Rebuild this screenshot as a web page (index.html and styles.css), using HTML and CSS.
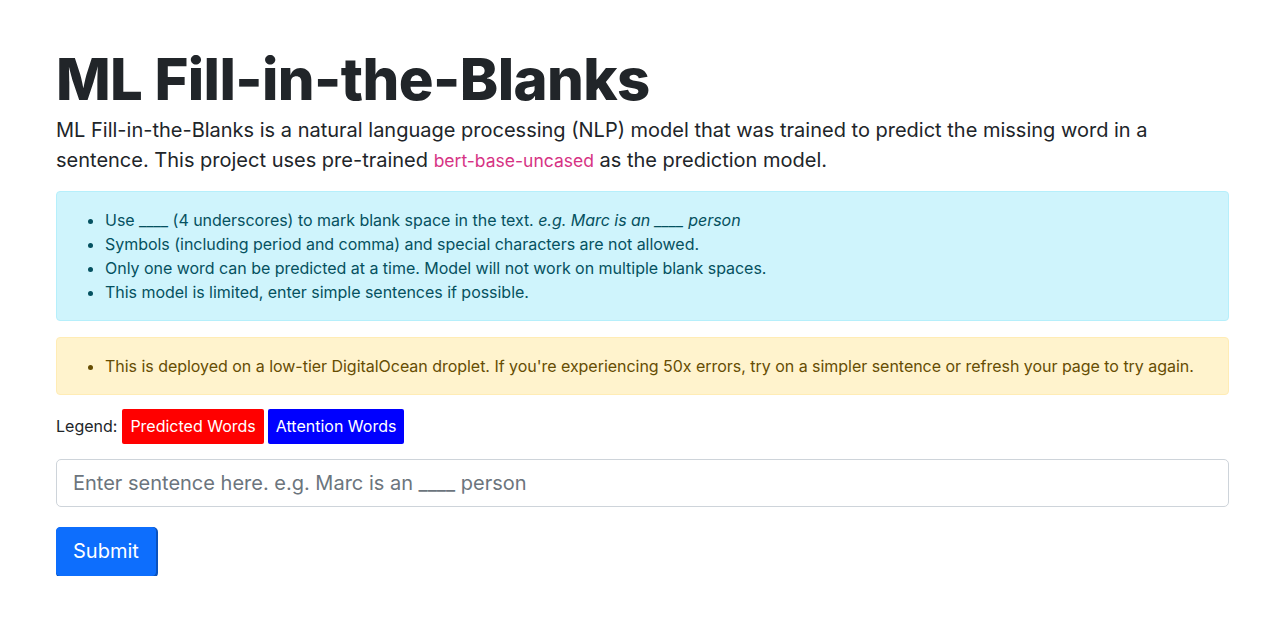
FILE: index.html
```html
<!DOCTYPE html>
<html lang="en">
<head>
<meta charset="utf-8">
<title>ML Fill-in-the-Blanks</title>
<link rel="stylesheet" href="styles.css">
</head>
<body>
<main class="page">
  <h1 class="title">ML Fill-in-the-Blanks</h1>
  <p class="lead">ML Fill-in-the-Blanks is a natural language processing (NLP) model that was trained to predict the missing word in a sentence. This project uses pre-trained <code class="code">bert-base-uncased</code> as the prediction model.</p>
  <div class="alert alert-info">
    <ul class="alert-list">
      <li>Use ____ (4 underscores) to mark blank space in the text. <em>e.g. Marc is an ____ person</em></li>
      <li>Symbols (including period and comma) and special characters are not allowed.</li>
      <li>Only one word can be predicted at a time. Model will not work on multiple blank spaces.</li>
      <li>This model is limited, enter simple sentences if possible.</li>
    </ul>
  </div>
  <div class="alert alert-warning">
    <ul class="alert-list">
      <li>This is deployed on a low-tier DigitalOcean droplet. If you're experiencing 50x errors, try on a simpler sentence or refresh your page to try again.</li>
    </ul>
  </div>
  <div class="legend">
    <span class="legend-label">Legend:</span>
    <span class="tag tag-red">Predicted Words</span>
    <span class="tag tag-blue">Attention Words</span>
  </div>
  <form class="form">
    <input class="input" type="text" placeholder="Enter sentence here. e.g. Marc is an ____ person">
    <button class="btn" type="button">Submit</button>
  </form>
</main>
</body>
</html>
```
FILE: styles.css
```css
* { box-sizing: border-box; }
html, body { margin: 0; padding: 0; background: #fff; }
body {
  font-family: Inter, "Noto Sans", sans-serif;
  font-size: 16px;
  line-height: 1.5;
  color: #212529;
}
.page {
  padding: 45px 55px 0 56px;
}
.title {
  margin: 0;
  font-size: 58px;
  font-weight: 800;
  line-height: 1.2;
  letter-spacing: -0.6px;
  color: #212529;
}
.lead {
  margin: 0 0 15px 0;
  font-size: 20px;
  line-height: 30px;
  font-weight: 400;
}
.code {
  font-family: Inter, "Noto Sans", sans-serif;
  font-size: 17.5px;
  color: #d63384;
}
.alert {
  border: 1px solid transparent;
  border-radius: 4px;
  padding: 16px;
  margin-bottom: 16px;
}
.alert-info {
  background: #cff4fc;
  border-color: #b6effb;
  color: #055160;
}
.alert-warning {
  background: #fff3cd;
  border-color: #ffecb5;
  color: #664d03;
  margin-bottom: 14px;
}
.alert-list {
  margin: 0;
  padding-left: 32px;
  letter-spacing: -0.03px;
}
.legend {
  display: flex;
  align-items: center;
  gap: 4px;
  margin-bottom: 15px;
}
.legend-label {
  margin-right: 1px;
}
.tag {
  display: inline-block;
  color: #fff;
  padding: 6px 8px;
  border-radius: 2px;
  line-height: 23px;
}
.tag-red { background: #ff0000; }
.tag-blue { background: #0000ff; }
.form {
  display: flex;
  flex-direction: column;
  align-items: flex-start;
}
.input {
  width: 100%;
  height: 48px;
  padding: 8px 16px;
  font-family: Inter, "Noto Sans", sans-serif;
  font-size: 20px;
  line-height: 30px;
  color: #212529;
  border: 1px solid #ced4da;
  border-radius: 5px;
  background: #fff;
  outline: none;
}
.input::placeholder { color: #6c757d; }
.btn {
  margin-top: 20px;
  height: 49px;
  padding: 8px 16px;
  font-family: Inter, "Noto Sans", sans-serif;
  font-size: 20px;
  line-height: 30px;
  color: #fff;
  background: #0d6efd;
  border: 1px solid #0d6efd;
  border-radius: 4px;
  box-shadow: 1px 1px 0 1px #0a52bd;
}
```
